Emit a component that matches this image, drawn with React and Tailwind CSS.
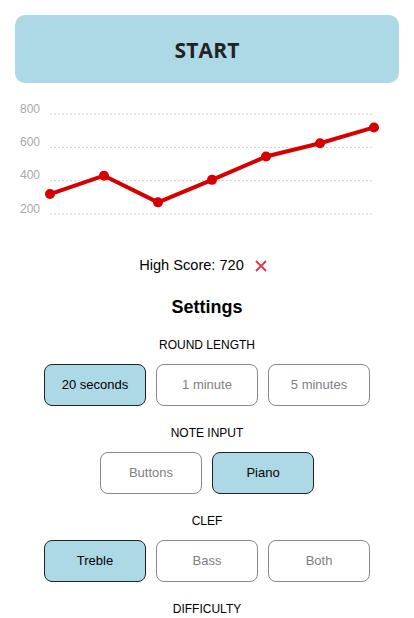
import React, { useState } from 'react';

const scores = [320, 430, 270, 405, 545, 625, 720];

function ScoreChart() {
  const x0 = 50;
  const step = 54;
  const yFor = v => 214 - (v - 200) * 0.1665;
  const pts = scores.map((v, i) => [x0 + i * step, yFor(v)]);
  const ticks = [800, 600, 400, 200];

  return (
    <svg width="414" height="173" viewBox="0 83 414 173" className="block">
      {ticks.map(t => (
        <g key={t}>
          <line x1="50" x2="373" y1={yFor(t)} y2={yFor(t)} stroke="#cfcfcf" strokeWidth="1" strokeDasharray="2 2" />
          <text x="40" y={yFor(t) - 1.5} textAnchor="end" fontSize="12" fill="#a9a9a9" fontFamily="'Liberation Sans', Arial, sans-serif">
            {t}
          </text>
        </g>
      ))}
      <polyline
        points={pts.map(p => p.join(',')).join(' ')}
        fill="none"
        stroke="#d60000"
        strokeWidth="4"
        strokeLinejoin="round"
      />
      {pts.map(([x, y], i) => (
        <circle key={i} cx={x} cy={y} r="5" fill="#d60000" />
      ))}
    </svg>
  );
}

function OptionRow({ options, value, onChange }) {
  return (
    <div className="flex justify-center gap-[10px]">
      {options.map(o => (
        <button
          key={o}
          onClick={() => onChange(o)}
          className={
            o === value
              ? 'w-[102px] h-[42px] rounded-[8px] border border-[#222] bg-[#add8e6] text-[13px] text-black'
              : 'w-[102px] h-[42px] rounded-[8px] border border-[#8a8a8a] bg-white text-[13px] text-[#808080]'
          }
        >
          {o}
        </button>
      ))}
    </div>
  );
}

function Section({ label, first, children }) {
  return (
    <>
      <div className={(first ? 'mt-[18px]' : 'mt-[19px]') + ' text-[12px] leading-[16px] text-center text-black'}>{label}</div>
      <div className="mt-[11px]">{children}</div>
    </>
  );
}

export default function App() {
  const [round, setRound] = useState('20 seconds');
  const [input, setInput] = useState('Piano');
  const [clef, setClef] = useState('Treble');

  return (
    <div className="w-[414px] h-[618px] overflow-hidden bg-white font-['Liberation_Sans',Arial,sans-serif]">
      <div className="px-[15px] pt-[15px]">
        <button className="w-full h-[68px] pt-[3px] rounded-[10px] bg-[#add8e6] font-['Open_Sans',sans-serif] font-bold text-[21px] text-[#222] tracking-[0.2px]">
          START
        </button>
      </div>

      <ScoreChart />

      <div className="flex items-center justify-center h-[20px] gap-[11px] pr-[8px]">
        <span className="text-[14.6px] text-black">High Score: 720</span>
        <svg width="12" height="12" viewBox="0 0 12 12">
          <path d="M1 1 L11 11 M11 1 L1 11" stroke="#e8334a" strokeWidth="1.8" />
        </svg>
      </div>

      <div className="mt-[19px] text-center font-bold text-[18px] leading-[24px] text-black">Settings</div>

      <Section label="ROUND LENGTH" first>
        <OptionRow options={['20 seconds', '1 minute', '5 minutes']} value={round} onChange={setRound} />
      </Section>
      <Section label="NOTE INPUT">
        <OptionRow options={['Buttons', 'Piano']} value={input} onChange={setInput} />
      </Section>
      <Section label="CLEF">
        <OptionRow options={['Treble', 'Bass', 'Both']} value={clef} onChange={setClef} />
      </Section>
      <Section label="DIFFICULTY">
        <div />
      </Section>
    </div>
  );
}
